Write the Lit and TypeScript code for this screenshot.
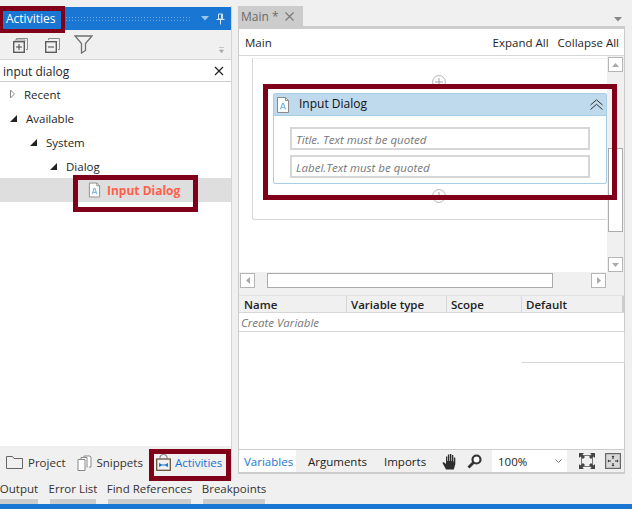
import { LitElement, html, css, svg } from "lit";
import { customElement } from "lit/decorators.js";

const docIcon = svg`<path d="M1.5 .5h8l3 3v12h-11z" fill="#fff" stroke="#8a8a8a"/><path d="M9.5 .5v3h3" fill="none" stroke="#8a8a8a"/><path d="M4.5 12.5l2-6h1l2 6M5.5 10.5h3" fill="none" stroke="#7db7e4" stroke-width="1.2"/>`;
const triFilled = svg`<path d="M1 8L8 1v7z" fill="#222"/>`;

@customElement("app-root")
export class AppRoot extends LitElement {
  static styles = css`
    :host { display: block; width: 632px; height: 509px; position: relative; overflow: hidden; background: #f0f0f0;
      font-family: "Open Sans", "Noto Sans", sans-serif; font-size: 11.5px; color: #1e1e1e; }
    * { box-sizing: border-box; }
    svg { display: block; flex: none; }
    .main { display: flex; height: 479px; padding-top: 6px; }
    .left { width: 232px; display: flex; flex-direction: column; border-right: 1px solid #d4d4d4; flex: none; }
    .phead { height: 23px; margin-top: 1px; background: #1976d2; display: flex; align-items: center; color: #fff; padding-left: 6px; font-size: 12px; flex: none; }
    .grip { width: 127px; margin-left: 12px; height: 6px; background-image: radial-gradient(circle, #6ea9e2 .7px, transparent .9px); background-size: 3px 3px; }
    .phead .ptitle { width: 47px; white-space: nowrap; }
    .pdrop { margin-left: 9px; margin-right: 7px; }
    .tools { height: 30px; display: flex; align-items: center; padding-left: 12px; position: relative; border-bottom: 1px solid #d4d4d4; flex: none; }
    .tplus { margin-right: 15px; }
    .tminus { margin-right: 13px; }
    .ovf { margin-left: auto; margin-right: 6px; align-self: flex-end; margin-bottom: 4px; }
    .search { height: 22px; background: #fff; display: flex; align-items: center; justify-content: space-between; padding: 1px 7px 0 3px; border-bottom: 1px solid #ccc; font-size: 12px; flex: none; }
    .tree { flex: 1; background: #fff; min-height: 0; }
    .node { height: 24px; display: flex; align-items: center; white-space: nowrap; }
    .node svg.arrow { margin-right: 8px; }
    .n0 { padding-left: 9px; }
    .n1 { padding-left: 29px; }
    .n2 { padding-left: 49px; }
    .leaf { background: #dedede; padding-left: 88px; height: 24px; gap: 6px; color: #ff5f4d; font-weight: 700; font-size: 12px; }
    .ltabs { height: 33px; display: flex; align-items: center; padding-left: 6px; color: #333; flex: none; }
    .ltab { display: flex; align-items: center; gap: 5px; margin-right: 11px; }
    .ltab.on { color: #1976d2; margin-left: 2px; margin-right: 0; gap: 4px; }
    .right { width: 387px; margin-left: 6px; display: flex; flex-direction: column; flex: none; }
    .tabstrip { height: 20px; display: flex; justify-content: space-between; align-items: center; flex: none; }
    .doc { width: 65px; height: 20px; background: #ccc; color: #6a6a6a; display: flex; align-items: center; padding-left: 3px; gap: 6px; font-size: 12px; }
    .tabdrop { margin-right: 3px; margin-top: 7px; }
    .body { flex: 1; border-top: 3px solid #ccc; border-left: 1px solid #ccc; border-right: 1px solid #ccc; border-bottom: 2px solid #ccc; display: flex; flex-direction: column; background: #fff; margin-bottom: 5px; min-height: 0; }
    .mhead { height: 27px; display: flex; align-items: center; justify-content: space-between; padding: 0 5px 0 6px; border-bottom: 1px solid #d6d6d6; flex: none; }
    .mhead .acts { display: flex; gap: 9px; }
    .canvaswrap { display: flex; height: 216px; flex: none; }
    .canvas { width: 368px; flex: none; padding: 2px 0 0 13px; overflow: hidden; }
    .seq { height: 162px; border-left: 1px solid #d6d6d6; border-bottom: 1px solid #d6d6d6; border-top: 1px solid #f0f0f0; border-radius: 0 0 0 3px; padding-top: 16px; padding-left: 20px; display: flex; flex-direction: column; }
    .plus { width: 14px; height: 14px; margin-left: 159px; }
    .card { height: 91px; margin: 4px 0 5px; border: 1px solid #a8cde8; border-radius: 2px; flex: none; display: flex; flex-direction: column; }
    .chead { height: 22px; background: #bfd9ed; display: flex; align-items: center; padding: 0 3px 2px 2px; border-bottom: 1px solid #a8cde8; font-size: 12px; color: #111; flex: none; }
    .chead svg:first-child { margin-top: 2px; }
    .chead svg:last-child { margin-top: 2px; }
    .chead .lbl { margin-left: 9px; flex: 1; }
    .cbody { padding: 11px 16px 0; display: flex; flex-direction: column; gap: 5px; }
    .inp { height: 23px; border: 2px solid #d6d6d6; color: #777; font-style: italic; display: flex; align-items: center; padding: 2px 0 0 4px; white-space: nowrap; }
    .vbar { width: 17px; background: #f0f0f0; padding: 1px 1px 0 1px; display: flex; flex-direction: column; justify-content: space-between; height: 216px; }
    .sb { width: 15px; height: 15px; background: #fff; border: 1px solid #b5b5b5; display: flex; align-items: center; justify-content: center; flex: none; }
    .thumb { background: #fff; border: 1px solid #ababab; flex: none; }
    .vthumb { width: 15px; height: 84px; margin-top: 75px; margin-bottom: 24px; }
    .hbar { height: 17px; background: #f0f0f0; display: flex; align-items: center; padding-left: 1px; flex: none; }
    .hthumb { width: 286px; height: 15px; margin-left: 12px; margin-right: 38px; }
    .gap { height: 6px; background: #f0f0f0; flex: none; }
    .thead { height: 18px; background: #f0f0f0; display: flex; font-weight: 600; color: #222; border-top: 1px solid #e2e2e2; border-bottom: 1px solid #d6d6d6; flex: none; }
    .th { border-right: 1px solid #d6d6d6; padding-left: 4px; display: flex; align-items: center; }
    .c1 { width: 108px; padding-left: 5px; } .c2 { width: 100px; } .c3 { width: 75px; } .c4 { flex: 1; border-right: 2px solid #ccc; }
    .trow { height: 19px; font-style: italic; color: #777; display: flex; align-items: center; padding: 0 0 0 2px; border-bottom: 1px solid #d6d6d6; flex: none; }
    .tspace { flex: 1; min-height: 0; }
    .tline { height: 31px; border-bottom: 1px solid #d6d6d6; margin-left: 283px; margin-right: -1px; border-right: 1px solid #d6d6d6; flex: none; }
    .foot { height: 23px; background: #f0f0f0; border-top: 1px solid #ccc; display: flex; align-items: center; flex: none; color: #222; }
    .ftab { height: 100%; display: flex; align-items: center; padding: 0 5px; background: #fff; color: #1976d2; width: 57px; margin-right: 12px; }
    .fl { margin-right: 17px; }
    .fl2 { margin-right: 17px; width: 41px; }
    .hand { margin-right: 9px; }
    .zoom { width: 75px; height: 100%; background: #fff; margin-left: 10px; display: flex; align-items: center; justify-content: space-between; padding: 0 5px 0 6px; margin-right: 11px; }
    .fit { margin-right: 10px; margin-left: 1px; }
    .outs { height: 25px; display: flex; color: #333; flex: none; }
    .out { height: 25px; border-bottom: 5px solid #ccc; padding-bottom: 2px; display: flex; align-items: center; margin-right: 12px; white-space: nowrap; justify-content: center; }
    .w1 { width: 38px; } .w2 { width: 46px; } .w3 { width: 83px; } .w4 { width: 62px; }
    .status { height: 5px; background: #1976d2; }
    .mark { position: absolute; border: 5px solid #80001a; pointer-events: none; }
    .m1 { left: -2px; top: 6px; width: 67px; height: 27px; border-width: 5px 4px 4px 5px; }
    .m2 { left: 73px; top: 175px; width: 125px; height: 37px; }
    .m3 { left: 149px; top: 449px; width: 82px; height: 32px; }
    .m4 { left: 263px; top: 84px; width: 354px; height: 116px; }
  `;

  private plus() {
    return html`<svg class="plus" width="14" height="14" viewBox="0 0 14 14"><circle cx="7" cy="7" r="6.4" fill="#fff" stroke="#b5b5b5"/><path d="M7 3v8M3 7h8" stroke="#a5a5a5"/></svg>`;
  }

  render() {
    return html`
      <div class="main">
        <div class="left">
          <div class="phead">
            <span class="ptitle">Activities</span>
            <div class="grip"></div>
            <svg class="pdrop" width="8" height="5" viewBox="0 0 8 5"><path d="M0 0h8L4 4.500z" fill="#9cc6ee"/></svg>
            <svg width="9" height="12" viewBox="0 0 9 12"><path d="M2.500 1h4v5h-4zM.5 6.500h8M4.500 7v4.500M5.500 1.500v4" fill="none" stroke="#d5e6f7"/></svg>
          </div>
          <div class="tools">
            <svg class="tplus" width="17" height="16" viewBox="0 0 17 16"><path d="M4.500 3V1.500h11v11H14" fill="none" stroke="#8c8c8c"/><path d="M3 3.500V3h10v1" fill="none" stroke="#999"/><rect x="1.700" y="4.700" width="10.600" height="10.600" fill="none" stroke="#5c5c5c" stroke-width="1.400"/><path d="M7 7v6M4 10h6" stroke="#444"/></svg>
            <svg class="tminus" width="17" height="16" viewBox="0 0 17 16"><path d="M4.500 3V1.500h11v11H14" fill="none" stroke="#8c8c8c"/><rect x="1.700" y="4.700" width="10.600" height="10.600" fill="none" stroke="#5c5c5c" stroke-width="1.400"/><path d="M4 10h6" stroke="#444"/></svg>
            <svg width="19" height="19" viewBox="0 0 19 19"><path d="M1 1h17l-6.500 7.500v7l-4 2.500v-9.500z" fill="none" stroke="#6f6f6f" stroke-width="1.300"/></svg>
            <svg class="ovf" width="6" height="8" viewBox="0 0 6 8"><path d="M0 .5h5M.5 3h4L2.500 6z" fill="#aaa" stroke="#aaa" stroke-width=".6"/></svg>
          </div>
          <div class="search"><span>input dialog</span>
            <svg width="10" height="10" viewBox="0 0 10 10"><path d="M1 1l8 8M9 1l-8 8" stroke="#222" stroke-width="1.200"/></svg>
          </div>
          <div class="tree">
            <div class="node n0"><svg class="arrow" width="7" height="10" viewBox="0 0 7 10" ><path d="M1.500 1l4 4-4 4z" fill="#fff" stroke="#8a8a8a"/></svg>Recent</div>
            <div class="node n0"><svg class="arrow" width="9" height="9" viewBox="0 0 9 9">${triFilled}</svg>Available</div>
            <div class="node n1"><svg class="arrow" width="9" height="9" viewBox="0 0 9 9">${triFilled}</svg>System</div>
            <div class="node n2"><svg class="arrow" width="9" height="9" viewBox="0 0 9 9">${triFilled}</svg>Dialog</div>
            <div class="node leaf"><svg width="13" height="16" viewBox="0 0 14 16">${docIcon}</svg>Input Dialog</div>
          </div>
          <div class="ltabs">
            <div class="ltab"><svg width="17" height="13" viewBox="0 0 17 13"><path d="M.5 12.500V.5h6l1.500 2h8.500v10z" fill="none" stroke="#666"/></svg>Project</div>
            <div class="ltab"><svg width="15" height="16" viewBox="0 0 15 16"><path d="M1 4.500h7v11H1zM4 4V2.500h6v10M7 2V1h6l1 1v10h-2" fill="#fff" stroke="#888"/></svg>Snippets</div>
            <div class="ltab on"><svg width="15" height="17" viewBox="0 0 15 17"><rect x=".7" y="5" width="13.600" height="11.300" fill="none" stroke="#5b4a2d" stroke-width="1.200"/><path d="M4 5V3a3.500 2.500 0 0 1 7 0v2" fill="none" stroke="#777"/><path d="M3 9l3 1.500h3l3-1.500v4l-3-1.500h-3l-3 1.500z" fill="#1976d2"/></svg>Activities</div>
          </div>
        </div>
        <div class="right">
          <div class="tabstrip">
            <div class="doc">Main *
              <svg width="9" height="9" viewBox="0 0 9 9"><path d="M.5.5l8 8M8.500.5l-8 8" stroke="#777" stroke-width="1.100"/></svg>
            </div>
            <svg class="tabdrop" width="8" height="5" viewBox="0 0 8 5"><path d="M0 0h8L4 4.500z" fill="#888"/></svg>
          </div>
          <div class="body">
            <div class="mhead"><span>Main</span><div class="acts"><span>Expand All</span><span>Collapse All</span></div></div>
            <div class="canvaswrap">
              <div class="canvas">
                <div class="seq">
                  ${this.plus()}
                  <div class="card">
                    <div class="chead">
                      <svg width="14" height="16" viewBox="0 0 14 16">${docIcon}</svg>
                      <span class="lbl">Input Dialog</span>
                      <svg width="13" height="11" viewBox="0 0 13 11"><path d="M.5 6L6.500 .8l6 5.200M.5 10.500L6.500 5.300l6 5.200" fill="none" stroke="#333"/></svg>
                    </div>
                    <div class="cbody">
                      <div class="inp">Title. Text must be quoted</div>
                      <div class="inp">Label.Text must be quoted</div>
                    </div>
                  </div>
                  ${this.plus()}
                </div>
              </div>
              <div class="vbar">
                <div class="sb"><svg width="7" height="4" viewBox="0 0 7 4"><path d="M3.500 0L7 4H0z" fill="#aaa"/></svg></div>
                <div class="thumb vthumb"></div>
                <div class="sb"><svg width="7" height="4" viewBox="0 0 7 4"><path d="M3.500 4L7 0H0z" fill="#aaa"/></svg></div>
              </div>
            </div>
            <div class="hbar">
              <div class="sb"><svg width="4" height="7" viewBox="0 0 4 7"><path d="M0 3.500L4 0v7z" fill="#aaa"/></svg></div>
              <div class="thumb hthumb"></div>
              <div class="sb"><svg width="4" height="7" viewBox="0 0 4 7"><path d="M4 3.500L0 0v7z" fill="#aaa"/></svg></div>
            </div>
            <div class="gap"></div>
            <div class="thead"><div class="th c1">Name</div><div class="th c2">Variable type</div><div class="th c3">Scope</div><div class="th c4">Default</div></div>
            <div class="trow">Create Variable</div>
            <div class="tline"></div>
            <div class="tspace"></div>
            <div class="foot">
              <div class="ftab">Variables</div>
              <span class="fl">Arguments</span><span class="fl2">Imports</span>
              <svg class="hand" width="16" height="17" viewBox="0 0 16 17"><path d="M4 16.500L.5 10l1-1 2.500 2V3.500h1.300V8h.6V1.500h1.400V8h.6V1h1.400v7h.6V2h1.400v6.500l.6.200V4.500h1.400V11l-1.500 5.500z" fill="#2e2e2e"/></svg>
              <svg width="15" height="15" viewBox="0 0 15 15"><circle cx="9.500" cy="5.500" r="4" fill="#fff" stroke="#333" stroke-width="2.200"/><path d="M6.500 8.500L1.500 13.500" stroke="#333" stroke-width="2.800"/></svg>
              <div class="zoom"><span>100%</span><svg width="7" height="4" viewBox="0 0 7 4"><path d="M.5.500l3 3 3-3" fill="none" stroke="#777"/></svg></div>
              <svg class="fit" width="16" height="16" viewBox="0 0 16 16"><path d="M3 2.500h10M3 13.500h10M2.500 3v10M13.500 3v10" stroke="#777"/><path d="M0 0h5L3.500 1.500 6 4 4 6 1.500 3.500 0 5zM16 0h-5l1.500 1.500L10 4l2 2 2.500-2.500L16 5zM0 16h5l-1.500-1.500L6 12l-2-2-2.500 2.500L0 11zM16 16h-5l1.500-1.500L10 12l2-2 2.500 2.500L16 11z" fill="#444"/></svg>
              <svg width="16" height="16" viewBox="0 0 16 16"><rect x=".6" y=".6" width="14.800" height="14.800" fill="#d8d8d8" stroke="#666" stroke-width="1.200"/><path d="M8 3v3M8 10v3M3 8h3M10 8h3" stroke="#333" stroke-width="1.200"/><path d="M6.500 4L8 2.500 9.500 4zM6.500 12L8 13.500 9.500 12zM4 6.500L2.500 8 4 9.500zM12 6.500L13.500 8 12 9.500z" fill="#333"/></svg>
            </div>
          </div>
        </div>
      </div>
      <div class="outs">
        <div class="out w1">Output</div><div class="out w2">Error List</div><div class="out w3">Find References</div><div class="out w4">Breakpoints</div>
      </div>
      <div class="status"></div>
      <div class="mark m1"></div><div class="mark m2"></div><div class="mark m3"></div><div class="mark m4"></div>
    `;
  }
}
